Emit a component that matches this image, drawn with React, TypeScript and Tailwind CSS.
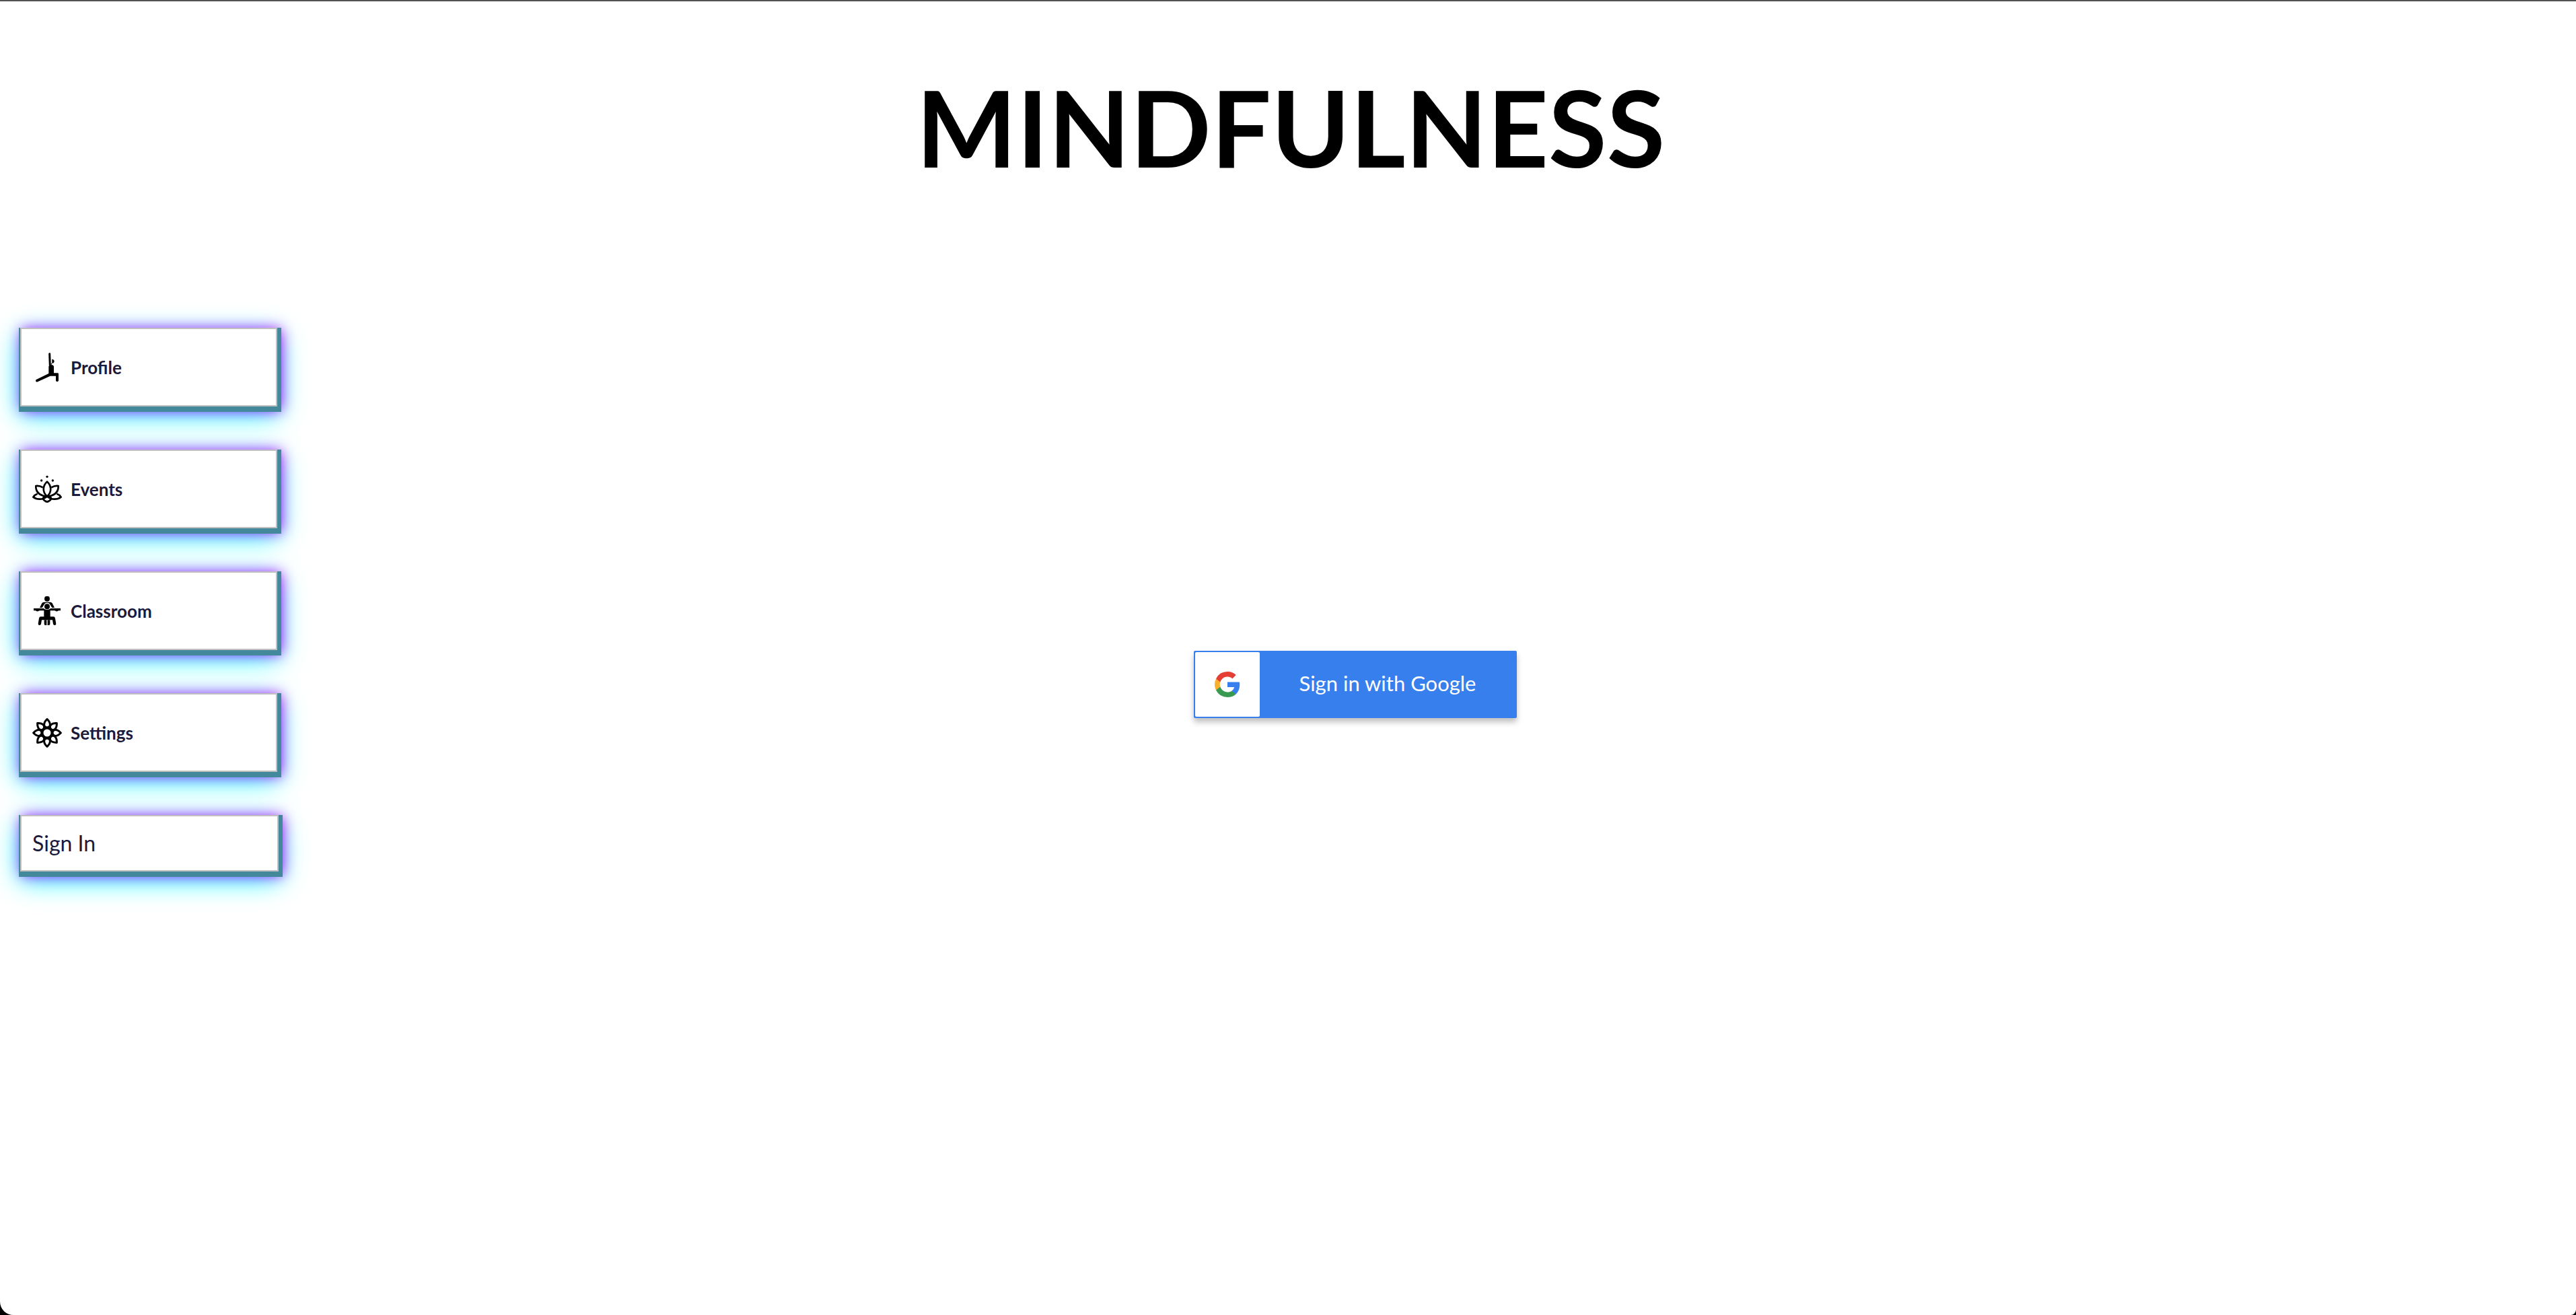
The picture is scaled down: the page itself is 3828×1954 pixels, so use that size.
import React from 'react';

function ProfileIcon() {
  return (
    <svg viewBox="0 0 132 132" className="size-11 shrink-0" fill="none" stroke="#000" strokeLinecap="round" aria-hidden="true">
      <path d="M77 5 L79 60" strokeWidth="9" />
      <path d="M88 29c6 0 9 4 10 9c0 5-4 10-10 10z" fill="#000" stroke="none" />
      <path d="M86 48L82 60" strokeWidth="3" />
      <path d="M73 61l14-7q9 2 9 8v29h17q4 0 4 4v31q-6 7-12 0V104H80L24 130q-8 3-9-5q0-3 3-5L73 93z" fill="#000" stroke="none" />
    </svg>
  );
}

function LotusIcon() {
  return (
    <svg viewBox="0 0 132 132" className="size-11 shrink-0" fill="none" stroke="#000" strokeWidth="8" strokeLinejoin="round" aria-hidden="true">
      <g fill="#000" stroke="none">
        <circle cx="66" cy="10" r="5" />
        <circle cx="41" cy="27" r="5" />
        <circle cx="91" cy="27" r="5" />
      </g>
      <path d="M66 32C48 48 42 76 66 98C90 76 84 48 66 32Z" />
      <path d="M47 58C36 51 26 50 16 51C15 70 24 91 60 98" />
      <path d="M85 58C96 51 106 50 116 51C117 70 108 91 72 98" />
      <path d="M23 86C14 89 8 94 4 101C20 113 46 114 66 98C86 114 112 113 128 101C124 94 118 89 109 86" />
      <path d="M47 108C50 99 58 97 66 98C74 97 82 99 85 108C79 117 72 121 66 122C60 121 53 117 47 108Z" />
    </svg>
  );
}

function ClassroomIcon() {
  return (
    <svg viewBox="0 0 132 132" className="size-11 shrink-0" fill="#000" aria-hidden="true">
      <circle cx="66" cy="11" r="12" />
      <circle cx="66" cy="46" r="12" />
      <path d="M33 51L43 31Q46 26 52 26H80Q86 26 89 31L99 51H88L80 38Q76 29 66 29Q56 29 52 38L44 51Z" />
      <path d="M6 54H50Q56 60 66 60Q76 60 82 54H126V64H117Q114 68 106 67L100 64H80V91H94Q101 91 102 98L106 123Q106 129 100 129Q94 129 93 124L90 106H42L39 124Q38 129 32 129Q26 129 26 123L30 98Q31 91 38 91H52V64H32L26 67Q18 68 15 64H6Z" />
      <path d="M53 106h11v23h-6q-5 0-5-5zM68 106h11v18q0 5-5 5h-6z" />
    </svg>
  );
}

function FlowerIcon() {
  const petals = [0, 45, 90, 135, 180, 225, 270, 315];
  return (
    <svg viewBox="0 0 132 132" className="size-11 shrink-0" fill="none" stroke="#000" strokeWidth="9" strokeLinejoin="round" aria-hidden="true">
      {petals.map((a) => (
        <path key={a} d="M66 42C49 40 48 22 66 5C84 22 83 40 66 42Z" transform={`rotate(${a} 66 66)`} />
      ))}
      <circle cx="66" cy="66" r="22" strokeWidth="11" />
    </svg>
  );
}

function GoogleLogo() {
  return (
    <svg viewBox="0 0 18 18" className="size-[38px]" aria-hidden="true">
      <path fill="#377fec" d="M17.64 9.2c0-.64-.06-1.25-.16-1.84H9v3.48h4.84a4.14 4.14 0 0 1-1.8 2.72v2.26h2.92c1.7-1.57 2.68-3.88 2.68-6.62z" />
      <path fill="#389a50" d="M9 18c2.43 0 4.47-.8 5.96-2.18l-2.91-2.26c-.81.54-1.84.86-3.05.86-2.34 0-4.33-1.58-5.04-3.71H.96v2.33A9 9 0 0 0 9 18z" />
      <path fill="#f9b02f" d="M3.96 10.71A5.41 5.41 0 0 1 3.68 9c0-.59.1-1.17.28-1.71V4.96H.96A9 9 0 0 0 0 9c0 1.45.35 2.83.96 4.04l3-2.33z" />
      <path fill="#e43e35" d="M9 3.58c1.32 0 2.51.45 3.44 1.35l2.58-2.59A8.64 8.64 0 0 0 9 0 9 9 0 0 0 .96 4.96l3 2.33C4.67 5.16 6.66 3.58 9 3.58z" />
    </svg>
  );
}

const links = [
  { label: 'Profile', Icon: ProfileIcon },
  { label: 'Events', Icon: LotusIcon },
  { label: 'Classroom', Icon: ClassroomIcon },
  { label: 'Settings', Icon: FlowerIcon },
];

const glow =
  'border-2 border-[#c0c0c0] bg-white px-4 text-[#1b1a3b] shadow-[2px_4px_0_4px_#43899b,4px_4px_20px_2px_#b400ff,0_12px_40px_0_#00ffff]';

export default function App() {
  return (
    <div className="bg-black font-['Lato',sans-serif]">
      <div className="min-h-screen rounded-bl-[20px] rounded-br-[8px] border-t-2 border-[#555354] bg-white">
        <header className="pt-[90px] pl-2 text-center">
          <h1 className="text-[158px] leading-[192px] font-bold text-black">MINDFULNESS</h1>
        </header>
        <main className="flex items-start pt-[203px] pl-[30px]">
          <nav className="flex w-96 shrink-0 flex-col gap-16" aria-label="Main">
            {links.map(({ label, Icon }) => (
              <a key={label} href="#" className={`mr-[2px] flex h-[117px] items-center gap-[13px] text-[26px] leading-8 font-bold ${glow}`}>
                <Icon />
                {label}
              </a>
            ))}
            <a href="#" className={`flex h-[84px] items-center text-[32px] leading-10 ${glow}`}>
              Sign In
            </a>
          </nav>
          <section className="flex flex-1 justify-center pt-[480px] pr-[214px]">
            <button
              type="button"
              className="flex h-[100px] w-[480px] items-center rounded-[2px] bg-[#377fec] p-[2px] text-[31px] leading-10 text-white shadow-[0_6px_8px_0_rgba(0,0,0,0.25)]"
            >
              <span className="flex size-24 items-center justify-center rounded-[2px] bg-white">
                <GoogleLogo />
              </span>
              <span className="flex-1 pb-1">Sign in with Google</span>
            </button>
          </section>
        </main>
      </div>
    </div>
  );
}
